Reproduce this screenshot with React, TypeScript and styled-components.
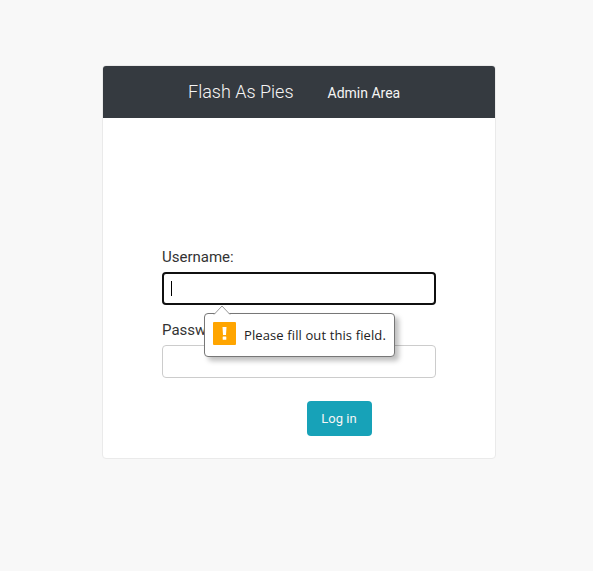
import React from "react";
import styled, { createGlobalStyle } from "styled-components";

const GlobalStyle = createGlobalStyle`
  *, *::before, *::after { box-sizing: border-box; }
  body {
    margin: 0;
    background: #f8f8f8;
    color: #333;
    font-family: Roboto, sans-serif;
  }
`;

const Page = styled.main`
  display: flex;
  justify-content: center;
  padding: 65px 0 0 5px;
  height: 571px;
  overflow: hidden;
`;

const Card = styled.section`
  width: 394px;
  height: 394px;
  background: #fff;
  border: 1px solid #eaeaea;
  border-radius: 4px;
  overflow: hidden;
`;

const Header = styled.header`
  display: flex;
  align-items: baseline;
  height: 52px;
  padding: 15px 0 0 85px;
  background: #353a40;
  color: #f5f5f5;
`;

const Brand = styled.h1`
  margin: 0;
  width: 139.5px;
  font-size: 18px;
  line-height: 22px;
  font-weight: 300;
  white-space: nowrap;
`;

const Area = styled.span`
  font-size: 14px;
  line-height: 20px;
  white-space: nowrap;
`;

const Form = styled.form`
  display: flex;
  flex-direction: column;
  padding: 129px 59px 0;
`;

const Field = styled.div`
  position: relative;
  height: 73px;
`;

const Label = styled.label`
  display: block;
  height: 25px;
  font-size: 15px;
  line-height: 20px;
`;

const Input = styled.div<{ $focused?: boolean }>`
  display: flex;
  align-items: center;
  width: 274px;
  height: 33px;
  padding-left: ${(p) => (p.$focused ? 7 : 8)}px;
  background: #fff;
  border: ${(p) => (p.$focused ? "2px solid #101010" : "1px solid #ccc")};
  border-radius: 4px;
`;

const Caret = styled.span`
  width: 1px;
  height: 15px;
  background: #000;
`;

const Submit = styled.button`
  align-self: flex-start;
  margin: 8px 0 0 145px;
  width: 65px;
  height: 35px;
  padding: 0 1px 0 0;
  border: 0;
  border-radius: 4px;
  background: #17a2b8;
  color: #f5f5f5;
  font: 400 13px/35px Roboto, sans-serif;
`;

const Bubble = styled.div`
  position: absolute;
  z-index: 1;
  left: 42px;
  top: 66px;
  display: flex;
  align-items: flex-start;
  width: 191px;
  height: 44px;
  padding: 8px 0 0 8px;
  gap: 8px;
  background: #fff;
  border: 1px solid #777;
  border-radius: 4px;
  box-shadow: 4px 4px 5px rgba(0, 0, 0, 0.25);
`;

const Pointer = styled.svg`
  position: absolute;
  left: 8px;
  top: -9px;
`;

const Message = styled.span`
  color: #222;
  font: 400 13px/18px "Open Sans", "Noto Sans", sans-serif;
  margin-top: 4px;
  letter-spacing: 0.11px;
  white-space: nowrap;
`;

function WarningIcon() {
  return (
    <svg width="23" height="23" viewBox="0 0 23 23">
      <rect width="23" height="23" rx="1" fill="#ffa500" />
      <path d="M9.5 5h4l-.5 8h-3z" fill="#fff" />
      <rect x="9.7" y="14.6" width="3.6" height="3.2" rx="0.5" fill="#fff" />
    </svg>
  );
}

export default function App() {
  return (
    <>
      <GlobalStyle />
      <Page>
        <Card>
          <Header>
            <Brand>Flash As Pies</Brand>
            <Area>Admin Area</Area>
          </Header>
          <Form>
            <Field>
              <Label>Username:</Label>
              <Input $focused>
                <Caret />
              </Input>
              <Bubble role="alert">
                <Pointer width="18" height="10" viewBox="0 0 18 10">
                  <path d="M1 10V9.5L9 1l8 8.5v.5z" fill="#fff" />
                  <path d="M1 9.5L9 1l8 8.5" fill="none" stroke="#999" />
                </Pointer>
                <WarningIcon />
                <Message>Please fill out this field.</Message>
              </Bubble>
            </Field>
            <Field>
              <Label>Password:</Label>
              <Input />
            </Field>
            <Submit type="button">Log in</Submit>
          </Form>
        </Card>
      </Page>
    </>
  );
}
